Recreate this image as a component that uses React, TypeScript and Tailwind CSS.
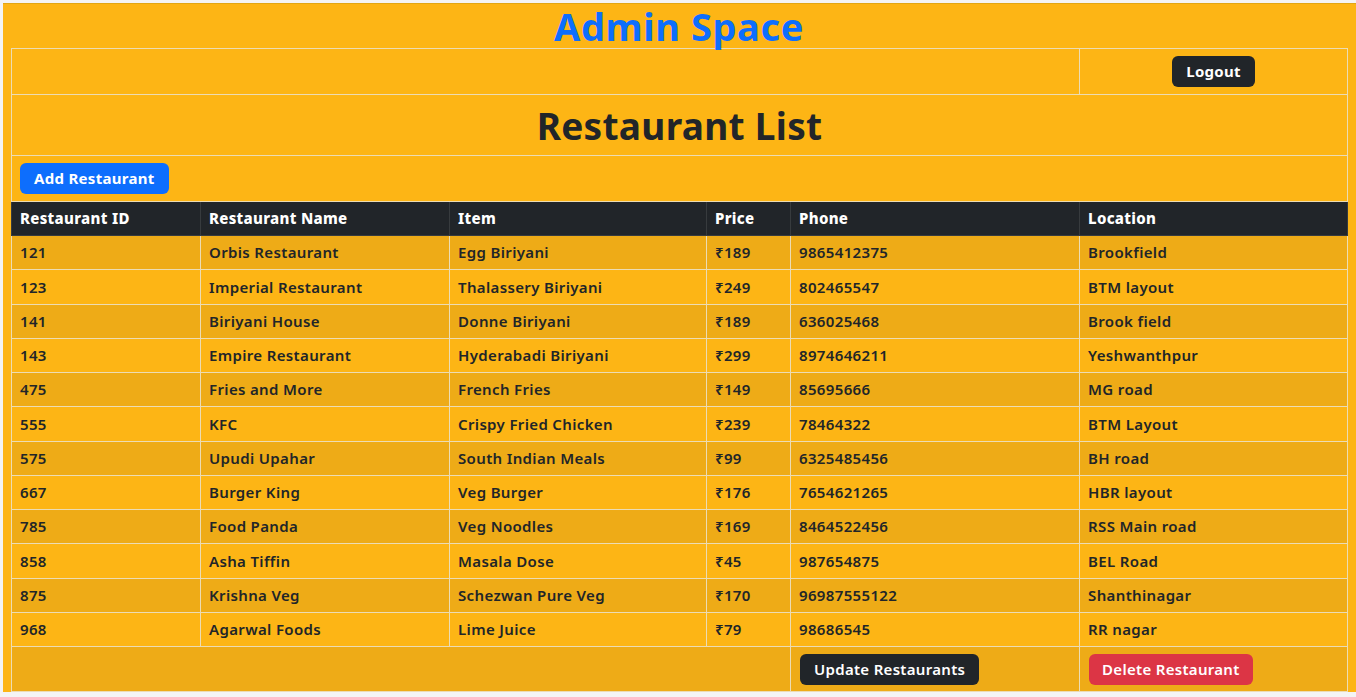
const rows = [
  ['121', 'Orbis Restaurant', 'Egg Biriyani', '₹189', '9865412375', 'Brookfield'],
  ['123', 'Imperial Restaurant', 'Thalassery Biriyani', '₹249', '802465547', 'BTM layout'],
  ['141', 'Biriyani House', 'Donne Biriyani', '₹189', '636025468', 'Brook field'],
  ['143', 'Empire Restaurant', 'Hyderabadi Biriyani', '₹299', '8974646211', 'Yeshwanthpur'],
  ['475', 'Fries and More', 'French Fries', '₹149', '85695666', 'MG road'],
  ['555', 'KFC', 'Crispy Fried Chicken', '₹239', '78464322', 'BTM Layout'],
  ['575', 'Upudi Upahar', 'South Indian Meals', '₹99', '6325485456', 'BH road'],
  ['667', 'Burger King', 'Veg Burger', '₹176', '7654621265', 'HBR layout'],
  ['785', 'Food Panda', 'Veg Noodles', '₹169', '8464522456', 'RSS Main road'],
  ['858', 'Asha Tiffin', 'Masala Dose', '₹45', '987654875', 'BEL Road'],
  ['875', 'Krishna Veg', 'Schezwan Pure Veg', '₹170', '96987555122', 'Shanthinagar'],
  ['968', 'Agarwal Foods', 'Lime Juice', '₹79', '98686545', 'RR nagar'],
];

const headers = ['Restaurant ID', 'Restaurant Name', 'Item', 'Price', 'Phone', 'Location'];

const cell = 'border border-[#ecdcb4] px-2 h-[34.25px] align-middle';

export default function App() {
  return (
    <div className="min-h-[697px] bg-[#f4f4f4] pt-[3px] pl-[3px] font-['Noto_Sans',sans-serif]">
      <div className="bg-[#fdb515] pl-2 pr-[9px] border-t border-[#e2a614]">
        <h2 className="text-center text-[38px] font-bold leading-[44px] text-[#0d6efd] tracking-[0.6px]">
          Admin Space
        </h2>
        <table className="w-full border-collapse table-fixed text-[#212529] text-[15px] font-semibold tracking-[0.35px]">
          <colgroup>
            <col className="w-[189px]" />
            <col className="w-[249px]" />
            <col className="w-[257px]" />
            <col className="w-[84px]" />
            <col className="w-[289px]" />
            <col className="w-[268px]" />
          </colgroup>
          <tbody>
            <tr className="h-[46px]">
              <td colSpan={5} className="border border-[#ecdcb4]"></td>
              <td className="border border-[#ecdcb4] text-center">
                <button className="bg-[#212529] text-white text-[15px] font-bold rounded-md px-[14px] h-[31px] tracking-[0.3px]">
                  Logout
                </button>
              </td>
            </tr>
            <tr className="h-[61px]">
              <td colSpan={6} className="border border-[#ecdcb4] text-center">
                <h1 className="text-[37px] font-bold leading-none tracking-[0.3px]">Restaurant List</h1>
              </td>
            </tr>
            <tr className="h-[46px]">
              <td colSpan={6} className="border border-[#ecdcb4] px-2">
                <button className="bg-[#0d6efd] text-white text-[15px] font-bold rounded-md px-[14px] h-[31px] tracking-[0.3px]">
                  Add Restaurant
                </button>
              </td>
            </tr>
            <tr className="bg-[#212529] text-white">
              {headers.map((h) => (
                <th key={h} className="border border-[#373b3e] px-2 h-[34px] text-left font-extrabold text-[15px] tracking-[0.3px]">
                  {h}
                </th>
              ))}
            </tr>
            {rows.map((r, i) => (
              <tr key={r[0]} className={i % 2 === 0 ? 'bg-[#eeab17]' : ''}>
                {r.map((v, j) => (
                  <td key={j} className={cell}>
                    {v}
                  </td>
                ))}
              </tr>
            ))}
            <tr className="bg-[#eeab17] h-[45px]">
              <td colSpan={4} className="border border-[#ecdcb4]"></td>
              <td className="border border-[#ecdcb4] px-[9px]">
                <button className="bg-[#212529] text-white text-[15px] font-semibold rounded-md px-[14px] h-[31px] tracking-[0.3px]">
                  Update Restaurants
                </button>
              </td>
              <td className="border border-[#ecdcb4] px-[9px]">
                <button className="bg-[#dc3545] text-white text-[15px] font-semibold rounded-md px-[13px] h-[31px] tracking-[0.3px]">
                  Delete Restaurant
                </button>
              </td>
            </tr>
          </tbody>
        </table>
      </div>
    </div>
  );
}
